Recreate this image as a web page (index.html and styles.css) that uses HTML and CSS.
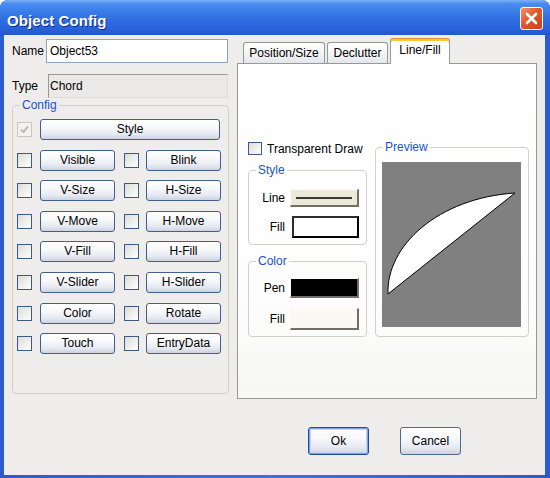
FILE: index.html
```html
<!DOCTYPE html>
<html>
<head>
<meta charset="utf-8">
<link rel="stylesheet" href="styles.css">
</head>
<body>
<div class="window">
  <div class="titlebar">
    <span class="title">Object Config</span>
    <span class="close"><svg width="21" height="21" viewBox="0 0 21 21"><path d="M6 6 L15 15 M15 6 L6 15" stroke="#fff" stroke-width="2.6" stroke-linecap="round"/></svg></span>
  </div>
  <div class="body">
    <div class="left">
      <div class="field">
        <span class="lbl name-lbl">Name</span>
        <div class="input name-input">Object53</div>
      </div>
      <div class="field type-field">
        <span class="lbl type-lbl">Type</span>
        <div class="input type-input">Chord</div>
      </div>
      <fieldset class="group config">
        <legend>Config</legend>
        <div class="cfg-rows">
          <div class="cfg-row">
            <span class="chk disabled"><svg width="13" height="13" viewBox="0 0 13 13"><path d="M3 6.5 L5.5 9 L10 3.5" fill="none" stroke="#bdbdbd" stroke-width="2"/></svg></span>
            <button class="btn wide">Style</button>
          </div>
          <div class="cfg-row"><span class="chk"></span><button class="btn">Visible</button><span class="chk c2"></span><button class="btn">Blink</button></div>
          <div class="cfg-row"><span class="chk"></span><button class="btn">V-Size</button><span class="chk c2"></span><button class="btn">H-Size</button></div>
          <div class="cfg-row"><span class="chk"></span><button class="btn">V-Move</button><span class="chk c2"></span><button class="btn">H-Move</button></div>
          <div class="cfg-row"><span class="chk"></span><button class="btn">V-Fill</button><span class="chk c2"></span><button class="btn">H-Fill</button></div>
          <div class="cfg-row"><span class="chk"></span><button class="btn">V-Slider</button><span class="chk c2"></span><button class="btn">H-Slider</button></div>
          <div class="cfg-row"><span class="chk"></span><button class="btn">Color</button><span class="chk c2"></span><button class="btn">Rotate</button></div>
          <div class="cfg-row"><span class="chk"></span><button class="btn">Touch</button><span class="chk c2"></span><button class="btn">EntryData</button></div>
        </div>
      </fieldset>
    </div>
    <div class="right">
      <div class="tabs">
        <div class="tab t1">Position/Size</div>
        <div class="tab t2">Declutter</div>
        <div class="tab t3 active">Line/Fill</div>
      </div>
      <div class="panel">
        <div class="panel-row">
          <div class="col-a">
            <div class="cb-row"><span class="chk small"></span><span>Transparent Draw</span></div>
            <fieldset class="group style-grp">
              <legend>Style</legend>
              <div class="sw-grid style-rows">
                <span class="sw-lbl">Line</span><span class="sw sw-line"><i></i></span>
                <span class="sw-lbl">Fill</span><span class="sw sw-fill"></span>
              </div>
            </fieldset>
            <fieldset class="group color-grp">
              <legend>Color</legend>
              <div class="sw-grid color-rows">
                <span class="sw-lbl">Pen</span><span class="sw sw-pen"></span>
                <span class="sw-lbl">Fill</span><span class="sw sw-cfill"></span>
              </div>
            </fieldset>
          </div>
          <fieldset class="group preview">
            <legend>Preview</legend>
            <div class="canvas">
              <svg width="139" height="165" viewBox="0 0 139 165"><path d="M6 132 C4 84 56 36 133 31 Z" fill="#fff" stroke="#000" stroke-width="1"/></svg>
            </div>
          </fieldset>
        </div>
      </div>
      <div class="footer">
        <button class="btn big default">Ok</button>
        <button class="btn big">Cancel</button>
      </div>
    </div>
  </div>
</div>
</body>
</html>
```
FILE: styles.css
```css
html, body {
  margin: 0;
  padding: 0;
  background: #ffffff;
}
body {
  font-family: "Liberation Sans", Arial, sans-serif;
  font-size: 12px;
  color: #000;
}
.window {
  width: 550px;
  height: 478px;
  display: flex;
  flex-direction: column;
  background: linear-gradient(90deg, #2a5bd0, #3f6fe0 50%, #2a5bd0);
  border-radius: 8px 8px 0 0;
  overflow: hidden;
}
.titlebar {
  height: 35px;
  flex: none;
  display: flex;
  align-items: flex-start;
  padding: 0 7px;
  background: linear-gradient(#7db2f6 0%, #4b8ef0 10%, #3a7ee9 30%, #2f6fe2 55%, #2963dc 80%, #2456cc 100%);
}
.title {
  margin-top: 12px;
  line-height: 17px;
  font-size: 15px;
  font-weight: bold;
  color: #fff;
  text-shadow: 1px 1px 0 #0e2c8c;
  letter-spacing: 0.1px;
}
.close {
  margin-left: auto;
  margin-top: 7px;
  width: 21px;
  height: 21px;
  border: 1px solid #fff;
  border-radius: 3px;
  background: linear-gradient(135deg, #f0936c 0%, #e2582d 45%, #c9401b 100%);
  display: flex;
}
.body {
  flex: 1;
  margin: 0 5px 3px 4px;
  background: #efecec;
  display: flex;
}
.left {
  width: 217px;
  padding: 4px 0 0 8px;
  flex: none;
}
.field {
  display: flex;
  align-items: center;
  height: 24px;
}
.type-field {
  margin-top: 11px;
}
.lbl {
  white-space: nowrap;
  flex: none;
}
.name-lbl {
  width: 33px;
  margin-right: 1px;
}
.type-lbl {
  width: 36px;
}
.input {
  box-sizing: border-box;
  height: 24px;
  line-height: 22px;
  flex: none;
}
.name-input {
  width: 182px;
  border: 1px solid #8fa3b9;
  background: #fff;
  padding-left: 3px;
}
.type-input {
  width: 180px;
  border: 1px solid;
  border-color: #9a9898 #dcdada #dcdada #9a9898;
  background: #ebe8e8;
  padding-left: 1px;
}
fieldset.group {
  margin: 0;
  padding: 0;
  border: 1px solid #d3d1c6;
  border-radius: 4px;
  min-inline-size: 0;
}
fieldset.group legend {
  margin-left: 7px;
  padding: 0 2px;
  font-size: 12px;
  line-height: 14px;
  color: #2153c6;
}
.config {
  width: 217px;
  box-sizing: border-box;
  margin-top: 9px;
}
.cfg-rows {
  display: flex;
  flex-direction: column;
  gap: 9.6px;
  padding: 7px 0 39px 4px;
}
.cfg-row {
  display: flex;
  align-items: center;
  height: 21px;
}
.chk {
  box-sizing: border-box;
  width: 15px;
  height: 15px;
  border: 1px solid #3b5a86;
  background: linear-gradient(135deg, #dcdcd6 0%, #f4f4f2 70%, #ffffff 100%);
  flex: none;
  margin-right: 8px;
  display: flex;
  align-items: center;
  justify-content: center;
}
.chk.disabled {
  border-color: #c9c7bd;
  background: #f3f2ee;
}
.chk.c2 {
  margin-left: 9px;
  margin-right: 7px;
}
.btn {
  box-sizing: border-box;
  width: 75px;
  height: 21px;
  margin: 0;
  padding: 0;
  border: 1px solid #415f8e;
  border-radius: 3px;
  background: linear-gradient(#ffffff 0%, #f7f8fb 40%, #e6e9f1 75%, #cdd2df 100%);
  font-family: "Liberation Sans", Arial, sans-serif;
  font-size: 12px;
  color: #000;
  text-align: center;
  line-height: 19px;
  flex: none;
}
.btn.wide {
  width: 180px;
}
.right {
  width: 300px;
  margin-left: 8px;
  padding-top: 3px;
  flex: none;
}
.tabs {
  display: flex;
  align-items: flex-end;
  height: 25px;
  padding-left: 6px;
}
.tab {
  box-sizing: border-box;
  height: 21px;
  margin-right: 2px;
  border: 1px solid #919b9c;
  border-bottom: none;
  border-radius: 3px 3px 0 0;
  background: linear-gradient(#ffffff 0%, #f6f6f6 45%, #e3e6ec 100%);
  text-align: center;
  line-height: 21px;
}
.t1 { width: 82px; }
.t2 { width: 61px; }
.t3 { width: 60px; }
.tab.active {
  position: relative;
  height: 26px;
  margin-bottom: -1px;
  background: #fff;
  border-top: 1px solid #e68b2c;
  box-shadow: inset 0 2px 0 #ffc73c;
  line-height: 22px;
}
.panel {
  box-sizing: border-box;
  height: 336px;
  border: 1px solid #919b9c;
  background: linear-gradient(#ffffff 0%, #fdfdfd 70%, #f7f7f5 100%);
  padding: 76px 0 0 10px;
}
.panel-row {
  display: flex;
  align-items: flex-start;
  gap: 8px;
}
.col-a {
  width: 119px;
  padding-top: 2px;
}
.cb-row {
  display: flex;
  align-items: center;
  height: 13px;
  white-space: nowrap;
}
.chk.small {
  width: 14px;
  height: 13px;
  margin-right: 5px;
}
.style-grp {
  margin-top: 8px !important;
}
.color-grp {
  margin-top: 9px !important;
}
.sw-grid {
  display: grid;
  grid-template-columns: 1fr 69px;
  column-gap: 5px;
  align-items: center;
  padding-right: 7px;
}
.style-rows {
  padding-top: 12px;
  padding-bottom: 6px;
  row-gap: 9px;
  grid-template-rows: 18px 22px;
}
.color-rows {
  padding-top: 10px;
  padding-bottom: 6px;
  row-gap: 10px;
  grid-template-rows: 20px 22px;
}
.sw-lbl {
  text-align: right;
}
.sw {
  box-sizing: border-box;
  display: flex;
  align-items: center;
  justify-content: center;
  height: 100%;
  border-style: solid;
  border-width: 1px 2px 2px 1px;
  border-color: #fbfbf8 #716f64 #716f64 #fbfbf8;
}
.sw-line {
  background: #ece9d8;
}
.sw-line i {
  display: block;
  width: 56px;
  height: 2px;
  background: #3a3a32;
}
.sw-fill {
  width: 67px;
  justify-self: end;
  background: #fff;
  border-width: 2px;
  border-color: #2e2e2e #000 #000 #2e2e2e;
}
.sw-pen {
  background: #000;
}
.sw-cfill {
  background: #fbf9f3;
}
.preview {
  width: 154px;
  box-sizing: border-box;
  margin-top: 0;
}
.canvas {
  padding: 8px 7px 9px 6px;
  display: flex;
}
.canvas svg {
  display: block;
  background: #808080;
}
.footer {
  display: flex;
  gap: 31px;
  margin-top: 28px;
  padding-left: 71px;
}
.btn.big {
  width: 61px;
  height: 28px;
  line-height: 26px;
  border-color: #50688e;
}
.btn.default {
  border-color: #1c4a9c;
  box-shadow: inset 0 0 0 1px #7fa2e4, inset 0 0 0 2px #c3d4f5;
}
```
